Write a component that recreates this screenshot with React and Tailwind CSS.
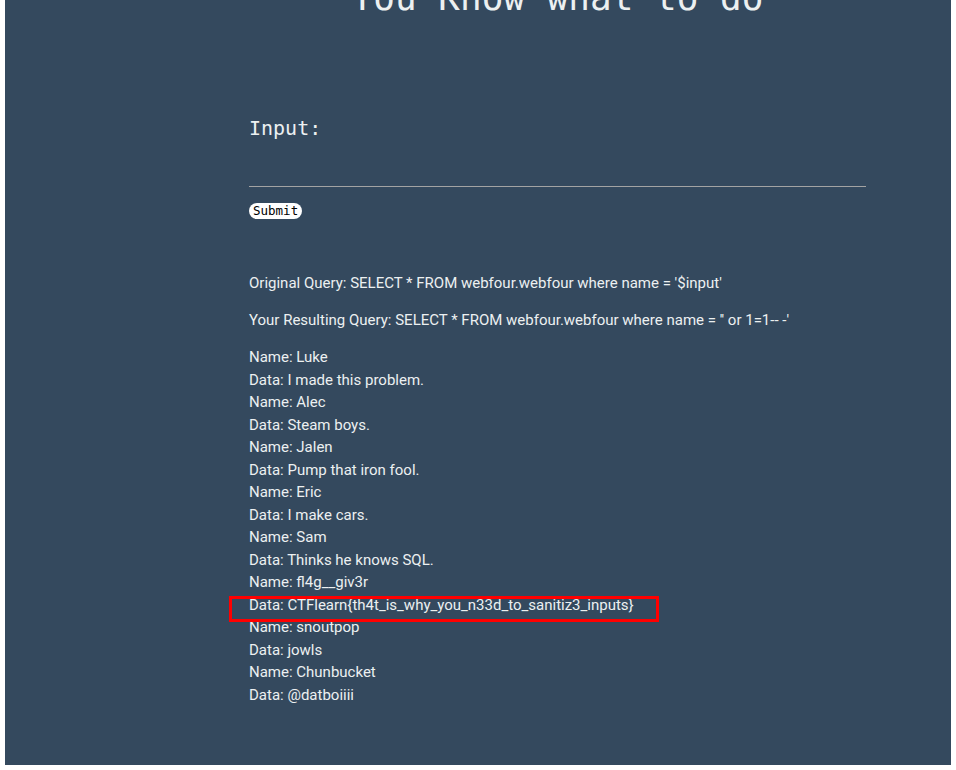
import React from "react";

const rows = [
  ["Name", "Luke"],
  ["Data", "I made this problem."],
  ["Name", "Alec"],
  ["Data", "Steam boys."],
  ["Name", "Jalen"],
  ["Data", "Pump that iron fool."],
  ["Name", "Eric"],
  ["Data", "I make cars."],
  ["Name", "Sam"],
  ["Data", "Thinks he knows SQL."],
  ["Name", "fl4g__giv3r"],
  ["Data", "CTFlearn{th4t_is_why_you_n33d_to_sanitiz3_inputs}"],
  ["Name", "snoutpop"],
  ["Data", "jowls"],
  ["Name", "Chunbucket"],
  ["Data", "@datboiiii"],
];

export default function App() {
  return (
    <div className="bg-white w-[956px] h-[770px] overflow-hidden">
      <div className="relative mx-[5px] h-[765px] bg-[#34495e] overflow-hidden text-[#ecf0f1]">
        <div className="ml-[244px] w-[617px]">
          <h1 className="-mt-[20px] h-[36px] text-center text-[36px] leading-[36px] font-['DejaVu_Sans_Mono',monospace] text-[#ecf0f1]">
            You Know what to do
          </h1>
          <div className="mt-[98px] text-[20px] leading-[28px] font-['DejaVu_Sans_Mono',monospace]">
            Input:
          </div>
          <input
            type="text"
            className="block mt-[5px] w-full h-[40px] bg-transparent border-0 border-b border-[#a3a3a3] outline-none"
          />
          <button className="block mt-[16px] h-[16px] px-[4px] rounded-full bg-white text-black text-[12.5px] leading-[16px] font-['DejaVu_Sans_Mono',monospace]">
            Submit
          </button>
          <div className="mt-[53px] font-['Roboto',sans-serif] text-[15px] leading-[22.5px]">
            <p className="h-[22.5px]">
              Original Query: SELECT * FROM webfour.webfour where name = '$input'
            </p>
            <p className="mt-[14.5px] h-[22.5px]">
              Your Resulting Query: SELECT * FROM webfour.webfour where name = '' or 1=1-- -'
            </p>
            <div className="mt-[14.5px]">
              {rows.map(([k, v], i) => (
                <div key={i} className="h-[22.5px] whitespace-nowrap">
                  {k}: {v}
                </div>
              ))}
            </div>
          </div>
        </div>
        <div className="absolute left-[224px] top-[596px] w-[430px] h-[26px] border-[3px] border-[#ff0000]" />
      </div>
    </div>
  );
}
